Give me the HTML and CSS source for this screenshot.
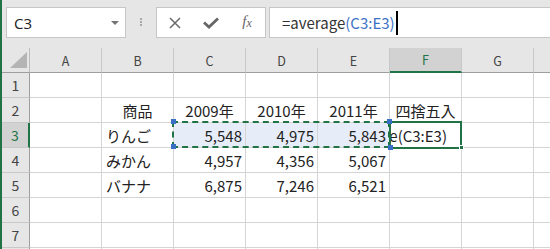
FILE: index.html
```html
<!DOCTYPE html>
<html>
<head lang="ja">
    <meta charset="UTF-8">
    <title>Sheet1</title>
    <link rel="stylesheet" href="styles.css">
</head>
<body>
<div class="app">
    <div class="formulaBar">
        <div class="nameBox"><span>C3</span><span class="drop"></span></div>
        <div class="grip"><i></i><i></i><i></i></div>
        <div class="fxButtons">
            <span class="fxBtn">
                <svg width="12" height="12" viewBox="0 0 12 12"><path d="M1 1L11 11M11 1L1 11" stroke="#6b6b6b" stroke-width="1.5" fill="none"/></svg>
            </span>
            <span class="fxBtn">
                <svg width="16" height="12" viewBox="0 0 16 12"><path d="M1 5.5L6 10L15 1.5" stroke="#666" stroke-width="2.8" fill="none"/></svg>
            </span>
            <span class="fxBtn fx"><i>f</i><i class="sub">x</i></span>
        </div>
        <div class="formula"><span>=average</span><span class="ref">(C3:E3)</span><span class="caret"></span></div>
    </div>

    <div class="sheet">
        <!-- header -->
        <div class="corner"><span class="tri"></span></div>
        <div class="ch">A</div>
        <div class="ch">B</div>
        <div class="ch">C</div>
        <div class="ch">D</div>
        <div class="ch">E</div>
        <div class="ch on">F</div>
        <div class="ch">G</div>
        <div class="ch"></div>

        <!-- 1 -->
        <div class="rh">1</div>
        <div class="cell"></div><div class="cell"></div><div class="cell"></div><div class="cell"></div>
        <div class="cell"></div><div class="cell"></div><div class="cell"></div><div class="cell"></div>

        <!-- 2 -->
        <div class="rh">2</div>
        <div class="cell"></div>
        <div class="cell c">商品</div>
        <div class="cell c">2009年</div>
        <div class="cell c">2010年</div>
        <div class="cell c">2011年</div>
        <div class="cell c">四捨五入</div>
        <div class="cell"></div><div class="cell"></div>

        <!-- 3 -->
        <div class="rh on">3</div>
        <div class="cell"></div>
        <div class="cell l">りんご</div>
        <div class="cell r sel ranged">5,548
            <div class="range"><b class="h tl"></b><b class="h bl"></b><b class="h tr"></b><b class="h br"></b></div>
        </div>
        <div class="cell r sel">4,975</div>
        <div class="cell r sel">5,843</div>
        <div class="cell edit">
            <span class="editText"><span>=average(C3:E3)</span></span>
            <div class="active"><b class="fill"></b></div>
        </div>
        <div class="cell"></div><div class="cell"></div>

        <!-- 4 -->
        <div class="rh">4</div>
        <div class="cell"></div>
        <div class="cell l">みかん</div>
        <div class="cell r">4,957</div>
        <div class="cell r">4,356</div>
        <div class="cell r">5,067</div>
        <div class="cell"></div><div class="cell"></div><div class="cell"></div>

        <!-- 5 -->
        <div class="rh">5</div>
        <div class="cell"></div>
        <div class="cell l">バナナ</div>
        <div class="cell r">6,875</div>
        <div class="cell r">7,246</div>
        <div class="cell r">6,521</div>
        <div class="cell"></div><div class="cell"></div><div class="cell"></div>

        <!-- 6 -->
        <div class="rh">6</div>
        <div class="cell"></div><div class="cell"></div><div class="cell"></div><div class="cell"></div>
        <div class="cell"></div><div class="cell"></div><div class="cell"></div><div class="cell"></div>

        <!-- 7 -->
        <div class="rh">7</div>
        <div class="cell"></div><div class="cell"></div><div class="cell"></div><div class="cell"></div>
        <div class="cell"></div><div class="cell"></div><div class="cell"></div><div class="cell"></div>

        <!-- 8 (only its top edge shows) -->
        <div class="rh"></div>
        <div class="cell"></div><div class="cell"></div><div class="cell"></div><div class="cell"></div>
        <div class="cell"></div><div class="cell"></div><div class="cell"></div><div class="cell"></div>
    </div>
</div>
</body>
</html>
```
FILE: styles.css
```css
*{padding: 0;margin: 0;box-sizing: border-box;}
html,body{
    height: 100%;
    overflow: hidden;
    background: #e6e6e6;
    font-family: "Noto Sans CJK JP", "Noto Sans", sans-serif;
    color: #222;
}
.app{
    height: 249px;
    border-left: 2px solid #217346;
    overflow: hidden;
}

/* formula bar */
.formulaBar{
    display: flex;
    height: 48px;
    padding: 7px 0 0 4px;
}
.nameBox{
    display: flex;
    align-items: center;
    justify-content: space-between;
    width: 120px;
    height: 31px;
    padding: 0 6px 0 7px;
    border: 1px solid #c6c6c6;
    background: #fff;
    font-family: "Open Sans", "Noto Sans", sans-serif;
    font-size: 15px;
    color: #222;
}
.nameBox .drop{
    width: 0;
    height: 0;
    border-left: 4px solid transparent;
    border-right: 4px solid transparent;
    border-top: 4px solid #737373;
}
.grip{
    display: flex;
    flex-direction: column;
    align-items: center;
    gap: 1px;
    width: 30px;
    padding-top: 11px;
}
.grip i{
    display: block;
    width: 2px;
    height: 2px;
    background: #a8a8a8;
}
.fxButtons{
    display: flex;
    width: 110px;
    height: 31px;
    border: 1px solid #c6c6c6;
    background: #fff;
}
.fxBtn{
    display: flex;
    align-items: center;
    justify-content: center;
    width: 36px;
}
.fxBtn.fx{
    font-family: "Liberation Serif", serif;
    color: #666;
    font-size: 15px;
    padding-bottom: 2px;
}
.fxBtn.fx .sub{
    font-size: 12px;
    margin-top: 3px;
}
.formula{
    display: flex;
    align-items: center;
    flex: 1;
    height: 31px;
    margin: 0 -6px 0 3px;
    padding-left: 12px;
    border: 1px solid #c6c6c6;
    background: #fff;
    font-size: 15px;
    color: #333;
    white-space: nowrap;
}
.formula .ref{color: #3c72c6;}
.formula .caret{
    width: 2px;
    height: 24px;
    margin-left: 1px;
    background: #000;
}

/* sheet */
.sheet{
    display: grid;
    grid-template-columns: 28px repeat(8, 72px);
    grid-auto-rows: 25px;
    font-size: 15px;
}
.sheet > div{
    display: flex;
    align-items: center;
    white-space: nowrap;
    border-right: 1px solid #d4d4d4;
    border-bottom: 1px solid #d4d4d4;
}
.sheet .corner{
    justify-content: flex-end;
    align-items: flex-end;
    padding: 0 2px 4px 0;
    background: #e6e6e6;
    border-right-color: #bdbdbd;
    border-bottom-color: #9e9e9e;
}
.corner .tri{
    width: 0;
    height: 0;
    border-left: 17px solid transparent;
    border-bottom: 16px solid #b4b4b4;
}
.sheet .ch{
    justify-content: center;
    background: #e6e6e6;
    font-size: 12.5px;
    color: #444;
    border-right-color: #c8c8c8;
    border-bottom-color: #9e9e9e;
}
.sheet .ch.on{
    background: #d2d2d2;
    color: #217346;
    border-bottom: 2px solid #217346;
}
.sheet .rh{
    justify-content: center;
    background: #e6e6e6;
    font-size: 14px;
    color: #444;
    border-right-color: #9e9e9e;
    border-bottom-color: #c8c8c8;
}
.sheet .rh.on{
    background: #d2d2d2;
    color: #217346;
    border-right: 2px solid #217346;
}
.sheet .cell{background: #fff;}
.sheet .l{padding-left: 4px;}
.sheet .c{justify-content: center;}
.sheet .r{justify-content: flex-end;padding-right: 3px;}
.sheet .sel{background: #e7edf8;}

/* selected range C3:E3 */
.ranged, .edit{position: relative;}
.range{
    position: absolute;
    top: -2px;
    left: -2px;
    width: 218px;
    height: 27px;
    border: 2px dashed #217346;
    z-index: 3;
}
.range .h{
    position: absolute;
    width: 5px;
    height: 5px;
    background: #3a6fc6;
}
.range .tl{left: -3px;top: -4px;}
.range .bl{left: -3px;bottom: -3px;}
.range .tr{right: -4px;top: -4px;}
.range .br{right: -5px;bottom: -4px;}

/* active cell F3, text scrolled so its end shows */
.editText{
    display: flex;
    justify-content: flex-end;
    flex: 1;
    min-width: 0;
    overflow: hidden;
    padding-right: 14px;
    color: #222;
}
.editText span{flex-shrink: 0;}
.active{
    position: absolute;
    top: -2px;
    left: -1px;
    width: 73px;
    height: 28px;
    border: 2px solid #217346;
    z-index: 2;
}
.active .fill{
    position: absolute;
    right: -4px;
    bottom: -3px;
    width: 5px;
    height: 5px;
    background: #217346;
    border: 1px solid #fff;
}
```
